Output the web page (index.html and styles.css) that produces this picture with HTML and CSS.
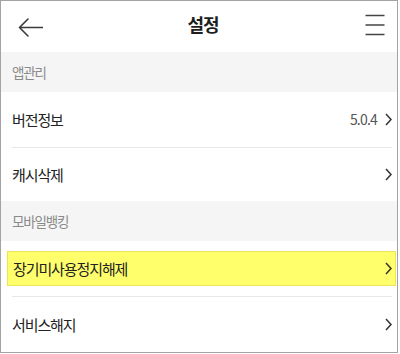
FILE: index.html
```html
<!DOCTYPE html>
<html lang="ko">
<head>
<meta charset="utf-8">
<title>설정</title>
<link rel="stylesheet" href="styles.css">
</head>
<body>
<div class="screen">
  <header class="topbar">
    <span class="back">
      <svg width="25" height="19" viewBox="0 0 25 19"><path d="M24.5 9.5H1.5M10 1L1.5 9.5L10 18" fill="none" stroke="#3a3a3a" stroke-width="1.6" stroke-linecap="round" stroke-linejoin="round"/></svg>
    </span>
    <h1 class="title">설정</h1>
    <span class="menu">
      <svg width="20" height="22" viewBox="0 0 20 22"><path d="M0.5 1.5H19.5M0.5 11H19.5M0.5 20.5H19.5" fill="none" stroke="#444" stroke-width="1.6"/></svg>
    </span>
  </header>

  <div class="section">앱관리</div>
  <div class="row row-first">
    <span class="label">버전정보</span>
    <span class="value">5.0.4</span>
    <span class="chev"><svg width="7" height="13" viewBox="0 0 7 13"><path d="M1 1L6 6.5L1 12" fill="none" stroke="#333" stroke-width="1.5"/></svg></span>
  </div>
  <div class="row row-second">
    <span class="label">캐시삭제</span>
    <span class="chev"><svg width="7" height="13" viewBox="0 0 7 13"><path d="M1 1L6 6.5L1 12" fill="none" stroke="#333" stroke-width="1.5"/></svg></span>
  </div>

  <div class="section">모바일뱅킹</div>
  <div class="hl-row">
    <div class="highlight">
      <span class="label">장기미사용정지해제</span>
      <span class="chev"><svg width="7" height="13" viewBox="0 0 7 13"><path d="M1 1L6 6.5L1 12" fill="none" stroke="#333" stroke-width="1.5"/></svg></span>
    </div>
    <div class="divider"></div>
  </div>
  <div class="row row-last">
    <span class="label">서비스해지</span>
    <span class="chev"><svg width="7" height="13" viewBox="0 0 7 13"><path d="M1 1L6 6.5L1 12" fill="none" stroke="#333" stroke-width="1.5"/></svg></span>
  </div>
</div>
</body>
</html>
```

FILE: styles.css
```css
html, body {
  margin: 0;
  padding: 0;
  background: #ffffff;
}

.screen {
  box-sizing: border-box;
  width: 398px;
  height: 353px;
  border: 1px solid #a3a3a3;
  background: #ffffff;
  font-family: "Noto Sans CJK KR", "Noto Sans", sans-serif;
  color: #222;
  overflow: hidden;
  display: flex;
  flex-direction: column;
}

.topbar {
  height: 51px;
  display: grid;
  grid-template-columns: 1fr auto 1fr;
  align-items: center;
  padding: 0 12px 0 17px;
}

.back {
  display: flex;
  justify-self: start;
  margin-top: 2px;
}

.menu {
  display: flex;
  justify-self: end;
  margin-top: -3px;
}

.title {
  margin: 0 0 0 3px;
  font-size: 18px;
  font-weight: 700;
  letter-spacing: -1px;
  color: #1e1e1e;
  margin-top: -5px;
}

.section {
  height: 40px;
  box-sizing: border-box;
  background: #f5f5f5;
  display: flex;
  align-items: center;
  padding-left: 11px;
  font-size: 13.5px;
  letter-spacing: -1.2px;
  color: #8a8a8a;
}

.row {
  display: flex;
  align-items: center;
  margin: 0 5px 0 11px;
}

.row-first {
  height: 55px;
  border-bottom: 1px solid #e8e8e8;
}

.row-second {
  height: 54px;
}

.row-last {
  height: 55px;
}

.label {
  flex: 1;
  font-size: 15px;
  letter-spacing: -1.1px;
  color: #222;
}

.value {
  font-size: 14px;
  letter-spacing: -0.8px;
  color: #555;
  margin-right: 8px;
}

.chev {
  display: flex;
}

.hl-row {
  padding: 10px 1px 0 6px;
}

.highlight {
  height: 35px;
  box-sizing: border-box;
  background: #ffff6c;
  border: 1px solid #ece55a;
  display: flex;
  align-items: center;
  padding: 0 3px 0 5px;
}

.divider {
  height: 1px;
  background: #e8e8e8;
  margin: 10px 4px 0 5px;
}
```
